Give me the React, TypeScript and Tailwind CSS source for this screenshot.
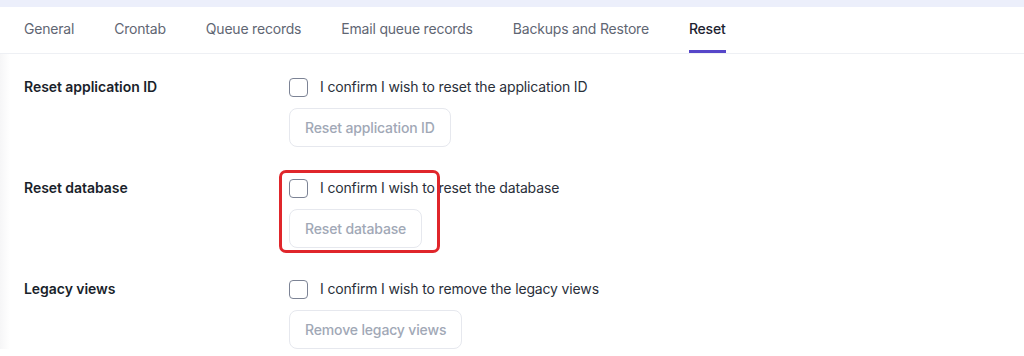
import React from 'react';

const TABS = ['General', 'Crontab', 'Queue records', 'Email queue records', 'Backups and Restore', 'Reset'];

const ROWS = [
  { label: 'Reset application ID', confirm: 'I confirm I wish to reset the application ID', action: 'Reset application ID' },
  { label: 'Reset database', confirm: 'I confirm I wish to reset the database', action: 'Reset database', marked: true },
  { label: 'Legacy views', confirm: 'I confirm I wish to remove the legacy views', action: 'Remove legacy views' },
];

export default function App() {
  return (
    <div className="w-[1024px] h-[356px] overflow-hidden bg-white text-sm" style={{ fontFamily: 'Inter, "Noto Sans", sans-serif' }}>
      <div className="h-[7px] bg-[#eceffb]" />

      <nav className="flex gap-10 px-6 border-b border-[#eef0f4] tracking-[-0.2px]">
        {TABS.map((t) => {
          const active = t === 'Reset';
          return (
            <button
              key={t}
              className={`pt-3 pb-[11px] border-b-[3px] leading-5 ${
                active ? 'border-[#5646c9] text-[#1c2230] font-medium' : 'border-transparent text-[#5f6673]'
              }`}
            >
              {t}
            </button>
          );
        })}
      </nav>

      <div className="pt-[23px] px-6 flex flex-col gap-[31px] bg-[linear-gradient(to_right,#f6f6f7,#ffffff_10px)]">
        {ROWS.map((r) => (
          <div key={r.label} className="flex">
            <div className="w-[265px] leading-5 font-semibold text-[#1a1f2b] tracking-[-0.05px]">{r.label}</div>
            <div className="relative flex flex-col gap-[11px] tracking-[-0.15px]">
              <label className="flex items-center gap-3 h-5 text-[#2a2f3a]">
                <span className="w-[19px] h-[19px] rounded-[4px] border-[1.5px] border-[#7c8395] bg-white" />
                {r.confirm}
              </label>
              <div>
                <button className="h-[39px] px-[15px] rounded-lg border border-[#e6e8ee] bg-white text-[#a1a8b6] font-medium">
                  {r.action}
                </button>
              </div>
              {r.marked && (
                <div className="absolute -left-[10px] -top-[8px] w-[161px] h-[83px] border-[3px] border-[#e0262b] rounded-[7px]" />
              )}
            </div>
          </div>
        ))}
      </div>
    </div>
  );
}
